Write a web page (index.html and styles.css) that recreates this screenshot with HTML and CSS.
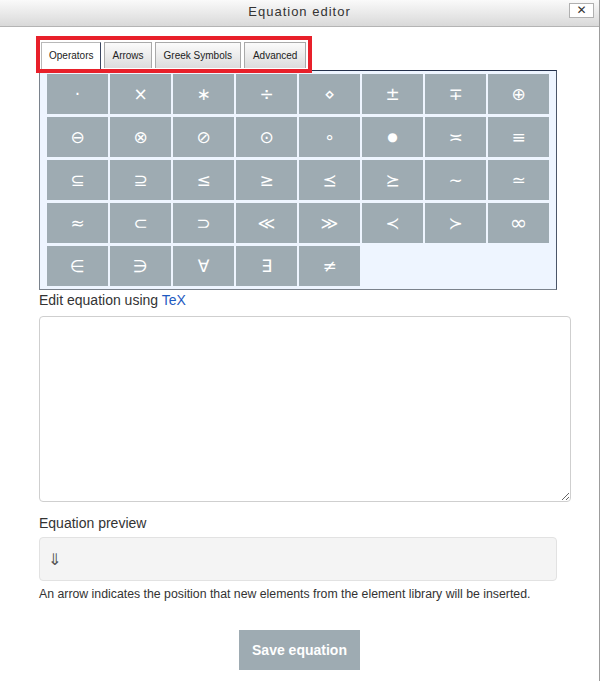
FILE: index.html
```html
<!DOCTYPE html>
<html>
<head>
<meta charset="utf-8">
<title>Equation editor</title>
<link rel="stylesheet" href="styles.css">
</head>
<body>
<div class="dialog">
  <div class="titlebar">
    <span></span>
    <span class="title">Equation editor</span>
    <span class="close-wrap"><button class="close">✕</button></span>
  </div>
  <div class="content">
    <div class="tabs">
      <div class="tab active">Operators</div>
      <div class="tab">Arrows</div>
      <div class="tab wide">Greek Symbols</div>
      <div class="tab wide">Advanced</div>
      <div class="highlight"></div>
    </div>
    <div class="panel">
      <div class="grid">
        <button class="sym">·</button>
        <button class="sym">×</button>
        <button class="sym">∗</button>
        <button class="sym">÷</button>
        <button class="sym">⋄</button>
        <button class="sym">±</button>
        <button class="sym">∓</button>
        <button class="sym">⊕</button>
        <button class="sym">⊖</button>
        <button class="sym">⊗</button>
        <button class="sym">⊘</button>
        <button class="sym">⊙</button>
        <button class="sym">∘</button>
        <button class="sym dot">●</button>
        <button class="sym">≍</button>
        <button class="sym">≡</button>
        <button class="sym">⊆</button>
        <button class="sym">⊇</button>
        <button class="sym">≤</button>
        <button class="sym">≥</button>
        <button class="sym">⪯</button>
        <button class="sym">⪰</button>
        <button class="sym">∼</button>
        <button class="sym">≃</button>
        <button class="sym">≈</button>
        <button class="sym">⊂</button>
        <button class="sym">⊃</button>
        <button class="sym">≪</button>
        <button class="sym">≫</button>
        <button class="sym">≺</button>
        <button class="sym">≻</button>
        <button class="sym big">∞</button>
        <button class="sym">∈</button>
        <button class="sym">∋</button>
        <button class="sym">∀</button>
        <button class="sym">∃</button>
        <button class="sym">≠</button>
      </div>
    </div>
    <div class="label label-tex">Edit equation using <a class="link" href="#">TeX</a></div>
    <textarea class="tex"></textarea>
    <div class="label label-preview">Equation preview</div>
    <div class="preview"><span class="cursor">⇓</span></div>
    <p class="help">An arrow indicates the position that new elements from the element library will be inserted.</p>
  </div>
  <div class="actions">
    <button class="save">Save equation</button>
  </div>
</div>
</body>
</html>
```
FILE: styles.css
```css
* { box-sizing: border-box; }
html, body { margin: 0; padding: 0; background: #fff; }
body { font-family: "Liberation Sans", Arial, sans-serif; color: #333; }

.dialog {
  width: 600px;
  height: 681px;
  border-right: 1px solid #9c9c9c;
  background: #fff;
}

.titlebar {
  height: 27px;
  display: grid;
  grid-template-columns: 1fr auto 1fr;
  align-items: start;
  background: linear-gradient(#fafafa, #d9d9d9);
  border-bottom: 1px solid #b4b4b4;
}
.title {
  font-size: 13px;
  line-height: 16px;
  letter-spacing: 1px;
  padding-top: 4px;
  color: #333;
}
.close-wrap { display: flex; justify-content: flex-end; padding: 3px 5px 0 0; }
.close {
  width: 25px;
  height: 15px;
  padding: 0;
  border: 1px solid #b0b0b0;
  background: #fff;
  color: #333;
  font-family: "DejaVu Sans", sans-serif;
  font-size: 12px;
  font-weight: bold;
  line-height: 13px;
}

.content { padding: 15px 0 0 39px; }

.tabs {
  position: relative;
  display: flex;
  gap: 3px;
  align-items: flex-start;
  padding-left: 2px;
  height: 28px;
}
.tab {
  height: 26px;
  padding: 0 7px;
  font-size: 10px;
  line-height: 25px;
  color: #222;
  border: 1px solid #a9a9a9;
  border-bottom: none;
  background: linear-gradient(#fbfbfb, #dcdcdc);
}
.tab.wide { padding: 0 8px; }
.tab.active {
  height: 29px;
  background: #fff;
  border-color: #b8b8b8 #3a4660 #fff #b8b8b8;
  position: relative;
  z-index: 1;
}
.highlight {
  position: absolute;
  left: -3px;
  top: -6px;
  width: 276px;
  height: 37px;
  border: 4px solid #e8202a;
  z-index: 2;
}

.panel {
  width: 518px;
  padding: 3px 7px 3px 7px;
  background: #eef5ff;
  border: 1px solid #7a828c;
  border-top-color: #23304b;
  border-right-color: #4a5568;
}
.grid {
  display: grid;
  grid-template-columns: repeat(8, 61px);
  grid-auto-rows: 40px;
  column-gap: 2px;
  row-gap: 3px;
}
.sym {
  border: none;
  padding: 0;
  margin: 0;
  background: #9eabb2;
  color: #fff;
  font-family: "DejaVu Sans", sans-serif;
  font-size: 17px;
  line-height: 40px;
  text-align: center;
}
.sym.big { font-size: 21px; }
.sym.dot { font-size: 12px; }

.label {
  font-size: 14px;
  line-height: 20px;
  color: #333;
}
.link { color: #1f5bc1; text-decoration: none; }

.tex {
  display: block;
  width: 532px;
  height: 186px;
  margin: 6px 0 0 0;
  border: 1px solid #cfcfcf;
  border-radius: 4px;
  background: #fff;
}

.label-preview { margin-top: 11px; }

.preview {
  width: 518px;
  height: 44px;
  margin-top: 4px;
  display: flex;
  align-items: center;
  padding-left: 8px;
  background: #f4f4f4;
  border: 1px solid #e2e2e2;
  border-radius: 4px;
}
.cursor {
  font-family: "DejaVu Sans", sans-serif;
  font-size: 16px;
  color: #555;
}

.help {
  margin: 5px 0 0 0;
  font-size: 12.3px;
  line-height: 17px;
  color: #333;
}

.actions {
  display: flex;
  justify-content: center;
  margin-top: 27px;
}
.save {
  width: 121px;
  height: 40px;
  border: none;
  background: #9eabb2;
  color: #fff;
  font-family: "Liberation Sans", Arial, sans-serif;
  font-size: 14px;
  font-weight: bold;
}
```
